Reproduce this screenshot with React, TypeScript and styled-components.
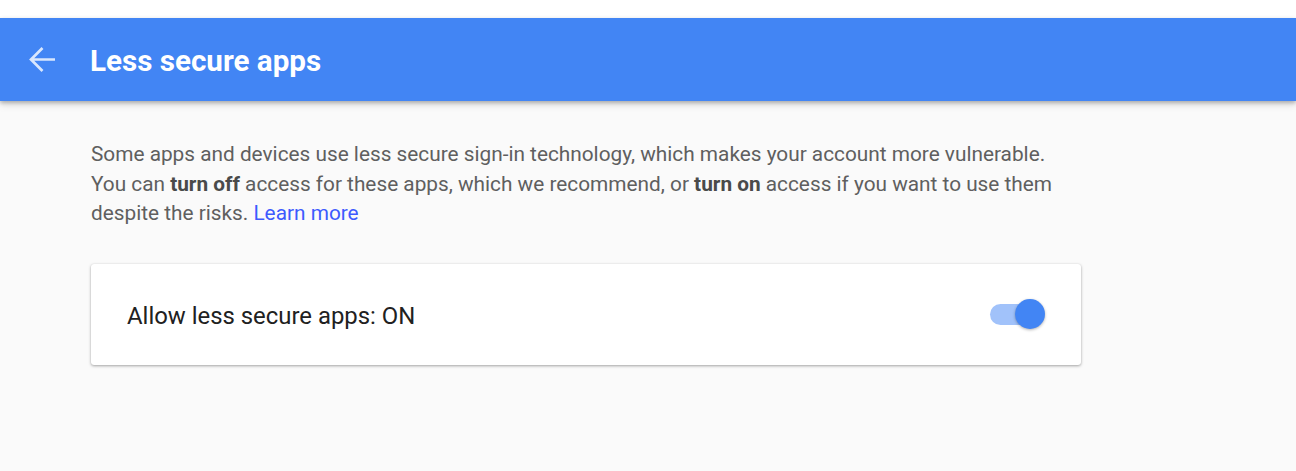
import React from "react";
import styled, { createGlobalStyle } from "styled-components";

const Global = createGlobalStyle`
  html, body { margin: 0; padding: 0; }
  body { background: #fafafa; font-family: Roboto, "Noto Sans", Arial, sans-serif; }
`;

const Page = styled.div`
  min-height: 471px;
  background: #fafafa;
  padding-top: 18px;
  box-sizing: border-box;
`;

const TopStrip = styled.div`
  position: absolute;
  top: 0; left: 0; right: 0;
  height: 18px;
  background: #ffffff;
`;

const Header = styled.header`
  height: 83px;
  background: #4285f4;
  display: flex;
  align-items: center;
  box-shadow: 0 2px 4px rgba(0,0,0,0.25), 0 4px 8px rgba(0,0,0,0.1);
  position: relative;
`;

const BackButton = styled.button`
  width: 90px;
  height: 83px;
  border: none;
  background: none;
  padding: 0 0 0 29px;
  display: flex;
  align-items: center;
  cursor: pointer;
  box-sizing: border-box;
`;

const Title = styled.h1`
  margin: 0;
  padding-top: 2px;
  color: #ffffff;
  font-size: 29.6px;
  font-weight: 700;
`;

const Content = styled.main`
  padding: 39px 0 0 91px;
  width: 990px;
`;

const Intro = styled.p`
  margin: 0;
  font-size: 20.8px;
  line-height: 29.5px;
  color: #5f5f5f;
  white-space: nowrap;
  b { color: #4a4a4a; font-weight: 700; }
`;

const Link = styled.a`
  color: #3d5afe;
  text-decoration: none;
`;

const Card = styled.section`
  margin-top: 35px;
  height: 101px;
  background: #fff;
  border-radius: 3px;
  box-shadow: 0 1px 3px rgba(0,0,0,0.35), 0 0 1px rgba(0,0,0,0.1);
  display: flex;
  align-items: center;
  justify-content: space-between;
  padding: 0 36px 0 36px;
  box-sizing: border-box;
`;

const Label = styled.span`
  padding-top: 3px;
  font-size: 23.9px;
  color: #212121;
`;

const Switch = styled.div<{ on: boolean }>`
  position: relative;
  width: 55px;
  height: 30px;
  display: flex;
  align-items: center;
`;

const Track = styled.div`
  width: 42px;
  height: 21px;
  border-radius: 11px;
  background: #a1c2fa;
`;

const Thumb = styled.div`
  position: absolute;
  right: 0;
  top: 0;
  width: 30px;
  height: 30px;
  border-radius: 50%;
  background: #4285f4;
  box-shadow: 0 1px 3px rgba(0,0,0,0.3);
`;

export default function App() {
  return (
    <>
      <Global />
      <TopStrip />
      <Page>
        <Header>
          <BackButton aria-label="Back">
            <svg width="27" height="27" viewBox="0 0 27 27" fill="none">
              <path d="M26 13.5H2.5M13.5 2L2 13.5L13.5 25" stroke="rgba(255,255,255,0.8)" strokeWidth="2.7" />
            </svg>
          </BackButton>
          <Title>Less secure apps</Title>
        </Header>
        <Content>
          <Intro>
            Some apps and devices use less secure sign-in technology, which makes your account more vulnerable.
            <br />
            You can <b>turn off</b> access for these apps, which we recommend, or <b>turn on</b> access if you want to use them
            <br />
            despite the risks. <Link href="#">Learn more</Link>
          </Intro>
          <Card>
            <Label>Allow less secure apps: ON</Label>
            <Switch on>
              <Track />
              <Thumb />
            </Switch>
          </Card>
        </Content>
      </Page>
    </>
  );
}
